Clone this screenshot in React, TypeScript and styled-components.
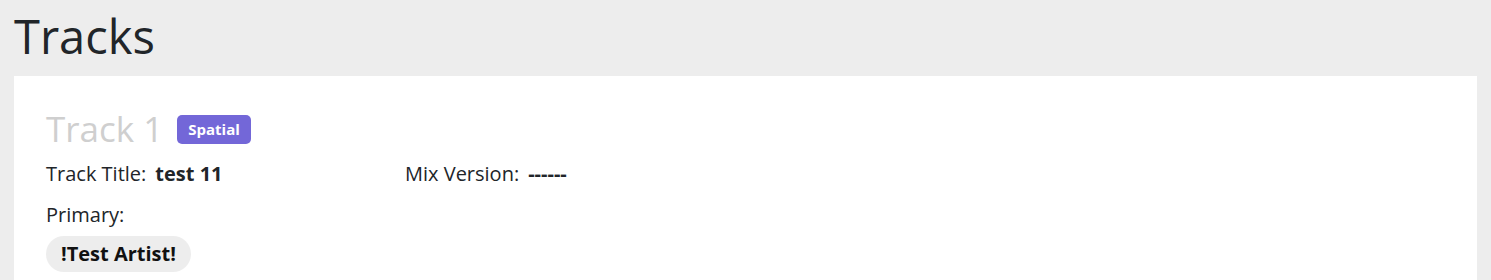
import React from 'react';
import styled, { createGlobalStyle } from 'styled-components';

const GlobalStyle = createGlobalStyle`
  html, body {
    margin: 0;
    padding: 0;
    background: #ededed;
    font-family: "Open Sans", "Liberation Sans", sans-serif;
    color: #212529;
  }
`;

const Page = styled.div`
  padding: 0 14px;
`;

const Heading = styled.h1`
  margin: 0;
  padding: 4px 0 8px;
  font-size: 47px;
  font-weight: 400;
  line-height: 64px;
`;

const Panel = styled.div`
  background: #fff;
  padding: 25px 32px 32px;
`;

const TrackHeader = styled.div`
  display: flex;
  align-items: center;
  gap: 14px;
`;

const TrackName = styled.h2`
  margin: 0;
  font-size: 35px;
  font-weight: 400;
  color: #cfcfcf;
  line-height: 56px;
`;

const Badge = styled.span`
  background: #7367d8;
  color: #fff;
  font-size: 15px;
  font-weight: 700;
  border-radius: 5px;
  padding: 5px 11px;
  line-height: 19px;
`;

const InfoGrid = styled.div`
  display: grid;
  grid-template-columns: 359px 1fr;
  margin-top: 3px;
`;

const Field = styled.div`
  font-size: 20px;
  line-height: 28px;
`;

const Value = styled.strong`
  font-weight: 700;
  margin-left: 9px;
`;

const Label = styled.div`
  font-size: 20px;
  line-height: 28px;
  margin-top: 13px;
`;

const Chip = styled.span`
  display: inline-block;
  margin-top: 7px;
  background: #ededed;
  border-radius: 18px;
  padding: 4px 15px;
  font-size: 20px;
  font-weight: 700;
  line-height: 28px;
  color: #111;
`;

export default function App() {
  return (
    <>
      <GlobalStyle />
      <Page>
        <Heading>Tracks</Heading>
        <Panel>
          <TrackHeader>
            <TrackName>Track 1</TrackName>
            <Badge>Spatial</Badge>
          </TrackHeader>
          <InfoGrid>
            <Field>
              Track Title:<Value>test 11</Value>
            </Field>
            <Field>
              Mix Version:<Value>------</Value>
            </Field>
          </InfoGrid>
          <Label>Primary:</Label>
          <Chip>!Test Artist!</Chip>
        </Panel>
      </Page>
    </>
  );
}
